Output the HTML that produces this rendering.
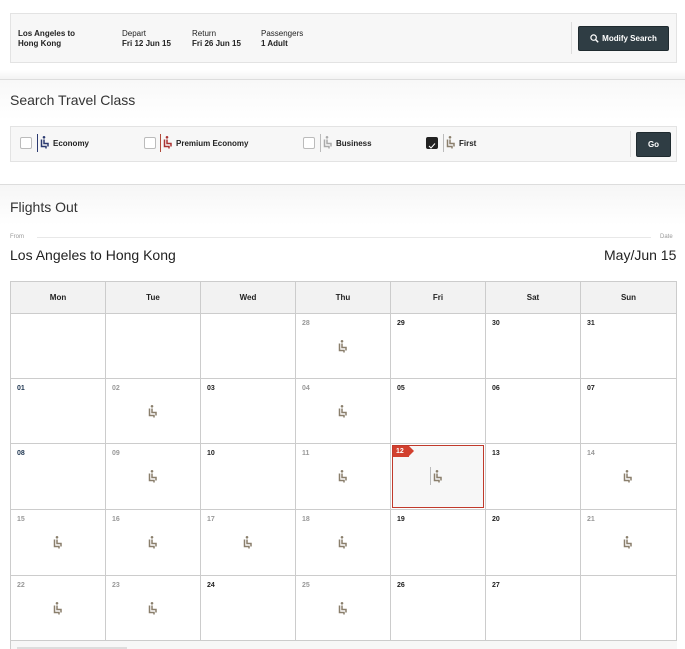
<!DOCTYPE html>
<html><head><style>
*{margin:0;padding:0;box-sizing:border-box}
body{width:685px;height:649px;background:#fff;font-family:"Liberation Sans",Arial,sans-serif;position:relative;overflow:hidden;color:#222}
.a{position:absolute}
.b{font-weight:bold}
.box{background:#f7f7f7;border:1px solid #e3e3e3}
.btn{background:#2f3d44;color:#fff;font-weight:bold;font-size:9px;border-radius:2px;display:flex;align-items:center;justify-content:center;border:1px solid #1f2a2f}
.cb{width:12px;height:12px;border:1px solid #bbb;background:#fff;border-radius:2px}
.sm{font-size:8px}
.cell{position:absolute;border-right:1px solid #ccc;border-bottom:1px solid #ccc;}
.d{position:absolute;left:6px;top:6px;font-size:7px;font-weight:bold}
.g{color:#999}
.k{color:#222}
.n{color:#1e3550}
.seat{position:absolute;left:42px;top:26px}
</style></head><body>
<div class="a box" style="left:10px;top:13px;width:667px;height:50px"></div>
<div class="a b sm" style="left:18px;top:29px;line-height:10px">Los Angeles to<br>Hong Kong</div>
<div class="a sm" style="left:122px;top:29px;line-height:10px">Depart<br><b>Fri 12 Jun 15</b></div>
<div class="a sm" style="left:192px;top:29px;line-height:10px">Return<br><b>Fri 26 Jun 15</b></div>
<div class="a sm" style="left:261px;top:29px;line-height:10px">Passengers<br><b>1 Adult</b></div>
<div class="a" style="left:571px;top:22px;width:1px;height:32px;background:#ddd"></div>
<div class="a btn" style="left:578px;top:26px;width:91px;height:25px;font-size:8px"><svg width="9" height="9" viewBox="0 0 9 9" style="margin-right:3px"><circle cx="3.6" cy="3.6" r="2.7" fill="none" stroke="#fff" stroke-width="1.2"/><path d="M5.5 5.5L8.2 8.2" stroke="#fff" stroke-width="1.4"/></svg>Modify Search</div>

<div class="a" style="left:0;top:70px;width:685px;height:10px;background:linear-gradient(#fff,#f2f2f2)"></div>
<div class="a" style="left:0;top:79px;width:685px;height:1px;background:#ddd"></div>
<div class="a" style="left:0;top:80px;width:685px;height:100px;background:linear-gradient(#f8f8f8,#fff 40%)"></div>
<div class="a" style="left:10px;top:92px;font-size:14px;color:#333">Search Travel Class</div>
<div class="a box" style="left:10px;top:126px;width:667px;height:36px"></div>
<div class="a cb" style="left:20px;top:137px"></div>
<div class="a" style="left:37px;top:134px;width:1px;height:18px;background:#2b3a70"></div>
<svg class="a" style="left:40px;top:136px" width="10" height="13" viewBox="0 0 10 13"><circle cx="4" cy="1.3" r="1.3" fill="#2b3a70"/><path d="M1.5 3.5v7h4.5v2M4 3.5v4h4v3" stroke="#2b3a70" stroke-width="1.5" fill="none"/></svg>
<div class="a b sm" style="left:53px;top:139px">Economy</div>
<div class="a cb" style="left:144px;top:137px"></div>
<div class="a" style="left:160px;top:134px;width:1px;height:18px;background:#b04a3a"></div>
<svg class="a" style="left:163px;top:136px" width="10" height="13" viewBox="0 0 10 13"><circle cx="4" cy="1.3" r="1.3" fill="#a33"/><path d="M1.5 3.5v7h4.5v2M4 3.5v4h4v3" stroke="#a33" stroke-width="1.5" fill="none"/></svg>
<div class="a b sm" style="left:176px;top:139px">Premium Economy</div>
<div class="a cb" style="left:303px;top:137px"></div>
<div class="a" style="left:320px;top:134px;width:1px;height:18px;background:#bbb"></div>
<svg class="a" style="left:323px;top:136px" width="10" height="13" viewBox="0 0 10 13"><circle cx="4" cy="1.3" r="1.3" fill="#aaa"/><path d="M1.5 3.5v7h4.5v2M4 3.5v4h4v3" stroke="#aaa" stroke-width="1.5" fill="none"/></svg>
<div class="a b sm" style="left:336px;top:139px">Business</div>
<div class="a cb" style="left:426px;top:137px;background:#222;border-color:#222"><svg width="10" height="10" viewBox="0 0 10 10"><path d="M2 5l2 2L8 2.5" stroke="#fff" stroke-width="1" fill="none"/></svg></div>
<div class="a" style="left:443px;top:134px;width:1px;height:18px;background:#bbb"></div>
<svg class="a" style="left:446px;top:136px" width="10" height="13" viewBox="0 0 10 13"><circle cx="4" cy="1.3" r="1.3" fill="#8a7f6c"/><path d="M1.5 3.5v7h4.5v2M4 3.5v4h4v3" stroke="#8a7f6c" stroke-width="1.5" fill="none"/></svg>
<div class="a b sm" style="left:459px;top:139px">First</div>
<div class="a" style="left:630px;top:131px;width:1px;height:26px;background:#ddd"></div>
<div class="a btn" style="left:636px;top:132px;width:35px;height:25px;font-size:8px">Go</div>

<div class="a" style="left:0;top:184px;width:685px;height:1px;background:#ddd"></div>
<div class="a" style="left:0;top:185px;width:685px;height:40px;background:linear-gradient(#f6f6f6,#fff)"></div>
<div class="a" style="left:10px;top:199px;font-size:14px;color:#333">Flights Out</div>
<div class="a" style="left:10px;top:234px;font-size:6px;color:#999">From</div>
<div class="a" style="left:37px;top:237px;width:614px;height:1px;background:#e8e8e8"></div>
<div class="a" style="left:660px;top:234px;font-size:6px;color:#999">Date</div>
<div class="a" style="left:10px;top:247px;font-size:14px;color:#222">Los Angeles to Hong Kong</div>
<div class="a" style="left:604px;top:247px;font-size:14px;color:#222">May/Jun 15</div>

<div class="a" style="left:10px;top:281px;width:667px;height:368px;border-left:1px solid #ccc;border-top:1px solid #ccc;background:#f7f7f7"></div>
<div id="cal"></div>
<script>
var cols=[11,106,201,296,391,486,581,677],rows=[282,314,379,444,510,576,641];
var names=["Mon","Tue","Wed","Thu","Fri","Sat","Sun"];
var h="";
for(var c=0;c<7;c++){h+='<div class="cell" style="left:'+cols[c]+'px;top:282px;width:'+(cols[c+1]-cols[c])+'px;height:32px;background:#f2f2f2;font-size:8px;font-weight:bold;text-align:center;line-height:31px">'+names[c]+'</div>';}
var days=[["","g","",""],["","g","",""],["","g","",""],["28","g",1],["29","k",0],["30","k",0],["31","k",0],
["01","n",0],["02","g",1],["03","k",0],["04","g",1],["05","k",0],["06","k",0],["07","k",0],
["08","n",0],["09","g",1],["10","k",0],["11","g",1],["12","s",1],["13","k",0],["14","g",1],
["15","g",1],["16","g",1],["17","g",1],["18","g",1],["19","k",0],["20","k",0],["21","g",1],
["22","g",1],["23","g",1],["24","k",0],["25","g",1],["26","k",0],["27","k",0],["","k",0]];
var seat='<svg class="seat" width="10" height="13" viewBox="0 0 10 13"><circle cx="4" cy="1.3" r="1.3" fill="#8a7f6c"/><path d="M1.5 3.5v7h4.5v2M4 3.5v4h4v3" stroke="#8a7f6c" stroke-width="1.5" fill="none"/></svg>';
for(var i=0;i<35;i++){var r=Math.floor(i/7),c=i%7,d=days[i];
var x=cols[c],y=rows[r+1],w=cols[c+1]-x,hh=rows[r+2]-y;
var inner='';
if(d[1]=="s"){inner='<div style="position:absolute;left:1px;top:1px;right:1px;bottom:1px;border:1px solid #c0392b;background:#f7f7f7"></div><div style="position:absolute;left:2px;top:2px;width:16px;height:11px;background:#d2402e;color:#fff;font-size:7px;font-weight:bold;line-height:11px;padding-left:3px">12</div><div style="position:absolute;left:18px;top:2px;width:0;height:0;border-top:5.5px solid transparent;border-bottom:5.5px solid transparent;border-left:5px solid #d2402e"></div><div style="position:absolute;left:39px;top:23px;width:1px;height:18px;background:#bbb"></div>'+seat;}
else{inner='<div class="d '+d[1]+'">'+d[0]+'</div>'+(d[2]?seat:'');}
h+='<div class="cell" style="left:'+x+'px;top:'+y+'px;width:'+w+'px;height:'+hh+'px;background:#fff">'+inner+'</div>';}
document.getElementById("cal").innerHTML=h;
</script>
<div class="a" style="left:17px;top:647px;width:110px;height:2px;background:#ddd"></div>
</body></html>
